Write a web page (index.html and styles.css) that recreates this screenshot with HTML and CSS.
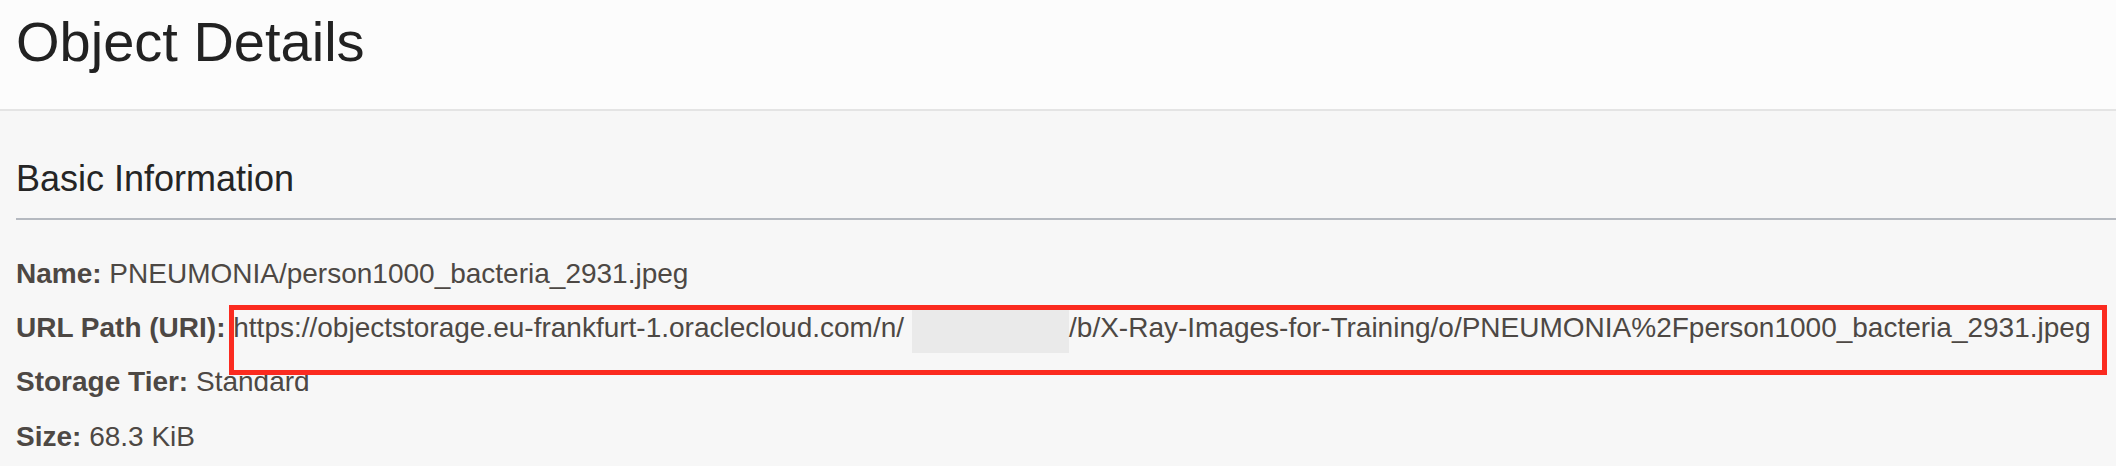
FILE: index.html
```html
<!DOCTYPE html>
<html lang="en">
<head>
<meta charset="utf-8">
<title>Object Details</title>
<link rel="stylesheet" href="styles.css">
</head>
<body>
<header class="page-header">
  <h1 class="page-title">Object Details</h1>
</header>
<main class="details">
  <h2 class="section-title">Basic Information</h2>
  <div class="info-list">
    <div class="info-row"><span class="label">Name:</span> PNEUMONIA/person1000_bacteria_2931.jpeg</div>
    <div class="info-row info-row--highlight"><span class="label">URL Path (URI):</span> https://objectstorage.eu-frankfurt-1.oraclecloud.com/n/<span class="redacted"></span>/b/X-Ray-Images-for-Training/o/PNEUMONIA%2Fperson1000_bacteria_2931.jpeg</div>
    <div class="info-row"><span class="label">Storage Tier:</span> Standard</div>
    <div class="info-row"><span class="label">Size:</span> 68.3 KiB</div>
  </div>
</main>
</body>
</html>
```

FILE: styles.css
```css
* {
  box-sizing: border-box;
}

html, body {
  margin: 0;
  padding: 0;
}

body {
  background: #f7f7f7;
  font-family: "Liberation Sans", Arial, Helvetica, sans-serif;
  width: 2116px;
  height: 466px;
  overflow: hidden;
}

.page-header {
  background: #fcfcfc;
  height: 111px;
  padding: 10px 16px 0 16px;
  border-bottom: 2px solid #e4e4e4;
}

.page-title {
  margin: 0;
  font-size: 56px;
  line-height: 64px;
  font-weight: normal;
  color: #222222;
}

.details {
  padding-left: 16px;
}

.section-title {
  margin: 46px 0 0 0;
  padding-bottom: 17px;
  font-size: 36px;
  line-height: 44px;
  font-weight: normal;
  color: #252525;
  border-bottom: 2px solid #b5b9c0;
}

.info-list {
  padding-top: 26.6px;
}

.info-row {
  font-size: 28px;
  line-height: 54.33px;
  color: #4d4844;
  white-space: nowrap;
}

.label {
  font-weight: bold;
}

.info-row--highlight {
  position: relative;
}

.info-row--highlight::after {
  content: "";
  position: absolute;
  left: 213px;
  right: 9px;
  top: 4px;
  height: 60px;
  border: 5px solid #fb2b20;
  pointer-events: none;
}

.redacted {
  display: inline-block;
  width: 157px;
  height: 44px;
  margin-left: 8px;
  background: #eaeaea;
  vertical-align: -16.4px;
}
```
